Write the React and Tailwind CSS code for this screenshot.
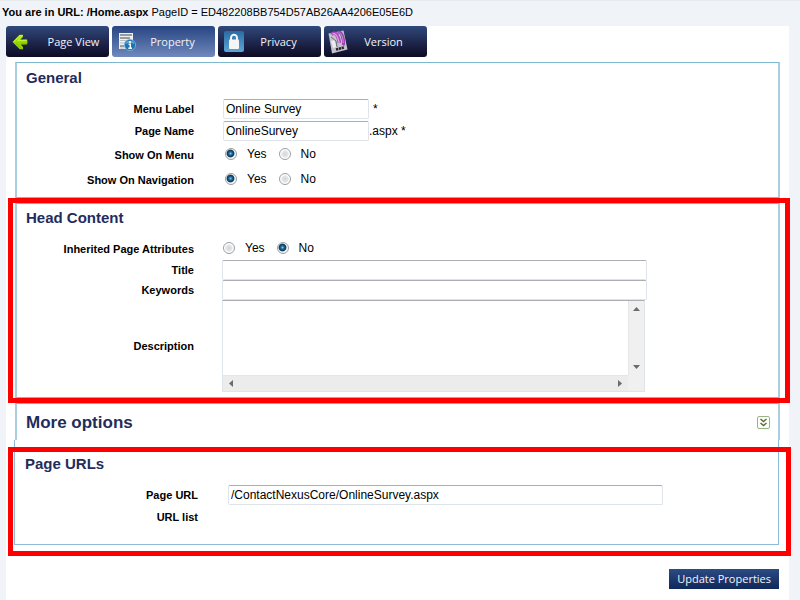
import React from "react";

const radioClass =
  "size-3 shrink-0 appearance-none rounded-full border border-[#9a9ea2] bg-[radial-gradient(circle,#d4d6d9_0,#e6e7e9_45%,#ffffff_60%)] checked:bg-[radial-gradient(circle_at_45%_45%,#7fd0f0_0,#1c6d9e_20%,#0d3555_44%,#f4f6f7_56%)]";

const inputClass =
  "h-5 min-w-0 rounded-[2px] border border-[#dfe3ea] border-t-[#abadb3] bg-white px-0.5 text-[12px] text-black outline-none";

function RadioPair({ name, label, value, className = "pl-[3px]" }) {
  return (
    <div role="radiogroup" aria-label={label} className={"flex items-center gap-3 pb-0.5 text-[12px] " + className}>
      <label className="flex items-center gap-2.5">
        <input type="radio" name={name} defaultChecked={value === "yes"} className={radioClass} />
        Yes
      </label>
      <label className="flex items-center gap-2.5">
        <input type="radio" name={name} defaultChecked={value === "no"} className={radioClass} />
        No
      </label>
    </div>
  );
}

const labelClass = "text-right text-[11px] font-bold leading-4";

function ArrowIcon() {
  return (
    <svg viewBox="0 0 16 16" className="size-4" aria-hidden="true">
      <path d="M0.5 8 7.5 0.8 10.8 0.8 11 3 8.4 5.6 15 5.4 15.5 7 15.2 10.2 8.6 10.4 11 13 11 15.2 7.8 15.2Z" fill="#96d600" />
      <path d="M1.8 7.8 8 1.6 10 1.6 6 6.5 14.6 6.3" fill="none" stroke="#c2f03a" strokeWidth="1.2" />
      <path d="M4.5 9.6 9.6 14.6M9 9.8H14.8" fill="none" stroke="#7dbb00" strokeWidth="1" />
    </svg>
  );
}

function InfoIcon() {
  return (
    <svg viewBox="0 0 18 20" className="h-5 w-[18px]" aria-hidden="true">
      <path d="M1 1H15V17H1Z" fill="#eef0f1" />
      <path d="M2 3H14M2 6H12M2 14H6" stroke="#45494d" strokeWidth="1.2" />
      <path d="M2 8.5H13M2 11H7M2 16H6" stroke="#b9bec3" strokeWidth="1" />
      <circle cx="12" cy="13" r="5.6" fill="#1b74b4" stroke="#7db6da" strokeWidth="0.8" />
      <path d="M7.3 12A5 5 0 0 1 16.7 12Q12 10 7.3 12Z" fill="#5fa9d6" />
      <circle cx="12" cy="10" r="1.1" fill="#fff" />
      <path d="M10.6 12.2H12.3V16M10.4 16.2H14" stroke="#fff" strokeWidth="1.4" fill="none" />
    </svg>
  );
}

function LockIcon() {
  return (
    <svg viewBox="0 0 20 21" className="h-[21px] w-5" aria-hidden="true">
      <defs>
        <linearGradient id="lockBg" x1="0" y1="0" x2="0" y2="1">
          <stop offset="0" stopColor="#2a6ca2" />
          <stop offset="1" stopColor="#5fa5d6" />
        </linearGradient>
      </defs>
      <rect width="20" height="21" rx="2" fill="url(#lockBg)" />
      <path d="M7 9.5V7a3 3.2 0 0 1 6 0V9.5" fill="none" stroke="#f2f5f8" strokeWidth="2" />
      <rect x="5" y="8.5" width="10" height="9.5" rx="1" fill="#f6f5f5" />
    </svg>
  );
}

function VersionIcon() {
  return (
    <svg viewBox="0 0 20 24" className="h-6 w-5" aria-hidden="true">
      <path d="M0.5 3.5 15.5 0.5 19.5 19.5 4 23.5Z" fill="#c3c2cb" />
      <path d="M3 11 6.5 10 8.5 17 5 18Z" fill="#ecebf0" />
      <path d="M3 7 8 11 9 17M13 5 16 16" fill="none" stroke="#6d6a76" strokeWidth="1" />
      <path d="M3.5 4.5C8 0.5 10.5 7 11.5 13" fill="none" stroke="#a94bbf" strokeWidth="3.6" />
      <path d="M9.5 2.5C14 1 16 8 15.5 15" fill="none" stroke="#9a45b2" strokeWidth="3" />
      <path d="M4.5 3.8C8.5 2.5 10 8 11.2 13" fill="none" stroke="#e0a3ec" strokeWidth="1.2" />
      <path d="M10.5 2.8C13.8 2.5 15 8 15.2 13" fill="none" stroke="#cf8be0" strokeWidth="1" />
      <path d="M8 19.5 16.5 17.4" stroke="#26242f" strokeWidth="2.6" strokeDasharray="2.3 0.6" />
    </svg>
  );
}

const tabs = [
  { name: "Page View", icon: <ArrowIcon />, padding: "pl-1.5", labelPadding: "pl-1.5" },
  { name: "Property", icon: <InfoIcon />, active: true, padding: "pl-1.5" },
  { name: "Privacy", icon: <LockIcon />, padding: "pl-1.5" },
  { name: "Version", icon: <VersionIcon />, padding: "pl-1" },
];

function Highlight() {
  return (
    <div className="pointer-events-none absolute -top-[5px] -right-[10px] -bottom-[5px] -left-[7px] border-[5px] border-[#ff0000]" />
  );
}

const panelClass = "border-x-2 border-y border-x-[#a9cee0] border-y-[#7db8d1]";

function Scrollbars() {
  return (
    <>
      <div className="flex flex-col items-center justify-between border-l border-[#e6e6e6] bg-[#f0f0f0] py-1.5">
        <svg viewBox="0 0 7 4" className="h-1 w-[7px]" aria-hidden="true"><path d="M0 4 3.5 0 7 4Z" fill="#6b6b6b" /></svg>
        <svg viewBox="0 0 7 4" className="h-1 w-[7px]" aria-hidden="true"><path d="M0 0 3.5 4 7 0Z" fill="#6b6b6b" /></svg>
      </div>
      <div className="flex items-center justify-between border-t border-[#e6e6e6] bg-[#ececec] px-1.5">
        <svg viewBox="0 0 4 7" className="h-[7px] w-1" aria-hidden="true"><path d="M4 0 0 3.5 4 7Z" fill="#6b6b6b" /></svg>
        <svg viewBox="0 0 4 7" className="h-[7px] w-1" aria-hidden="true"><path d="M0 0 4 3.5 0 7Z" fill="#6b6b6b" /></svg>
      </div>
      <div className="bg-[#f0f0f0]" />
    </>
  );
}

export default function App() {
  return (
    <div className="flex min-h-screen flex-col border-t border-[#e6eaed] bg-[#f0f4f8] font-['Liberation_Sans',Arial,sans-serif] text-black">
      <header className="flex h-[25px] items-center gap-[3px] pl-0.5 pb-0.5 text-[11px] whitespace-nowrap">
        <strong>You are in URL: /Home.aspx</strong>
        <span>PageID = ED482208BB754D57AB26AA4206E05E6D</span>
      </header>

      <main className="mr-[11px] ml-1.5 flex-1 bg-white">
        <nav className="flex gap-[3px]">
          {tabs.map((tab) => (
            <button
              key={tab.name}
              type="button"
              className={
                "flex h-[31px] w-[103px] items-center rounded-[3px] bg-linear-to-b font-['Open_Sans','Noto_Sans',sans-serif] text-[11px] text-[#f1f3f8] " +
                tab.padding +
                (tab.active ? " from-[#274582] to-[#7189bd]" : " from-[#31497d] to-[#0d0b25]")
              }
            >
              <span className="flex w-5 justify-start">{tab.icon}</span>
              <span className={"flex-1 pt-0.5 text-center " + (tab.labelPadding || "pr-2")}>{tab.name}</span>
            </button>
          ))}
        </nav>

        <div className="mt-[5px] mr-[9px] ml-[9px] flex flex-col gap-[5px]">
          <section className={panelClass + " pb-1"}>
            <h2 className="pt-[5px] pl-[9px] text-[15px] leading-5 font-bold text-[#1f2c5c]">General</h2>
            <div className="mt-2.5 grid grid-cols-[177px_1fr] grid-rows-[22px_22px_25px_26px] items-center gap-x-7">
              <label htmlFor="menu-label" className={labelClass}>Menu Label</label>
              <div className="flex items-center gap-1 pl-px text-[12px]">
                <input id="menu-label" defaultValue="Online Survey" className={inputClass + " w-[146px]"} />
                <span>*</span>
              </div>
              <label htmlFor="page-name" className={labelClass}>Page Name</label>
              <div className="flex items-center pl-px text-[12px]">
                <input id="page-name" defaultValue="OnlineSurvey" className={inputClass + " w-[146px]"} />
                <span>.aspx *</span>
              </div>
              <span className={labelClass}>Show On Menu</span>
              <RadioPair name="menu" label="Show On Menu" value="yes" />
              <span className={labelClass}>Show On Navigation</span>
              <RadioPair name="navigation" label="Show On Navigation" value="yes" />
            </div>
          </section>

          <div className="relative">
            <section className={panelClass + " pb-[5px]"}>
              <h2 className="pt-1 pl-[9px] text-[15px] leading-5 font-bold text-[#1f2c5c]">Head Content</h2>
              <div className="mt-2.5 grid grid-cols-[177px_1fr] grid-rows-[22px_20px_20px_92px] items-center gap-x-7">
                <span className={labelClass}>Inherited Page Attributes</span>
                <RadioPair name="inherited" label="Inherited Page Attributes" value="no" className="pl-px" />
                <label htmlFor="title" className={labelClass}>Title</label>
                <input id="title" className={inputClass + " w-full max-w-[425px]"} />
                <label htmlFor="keywords" className={labelClass}>Keywords</label>
                <input id="keywords" className={inputClass + " w-full max-w-[425px]"} />
                <label htmlFor="description" className={labelClass}>Description</label>
                <div className="grid h-full w-full max-w-[423px] grid-cols-[1fr_16px] grid-rows-[1fr_16px] border border-[#dfe3ea] border-t-[#abadb3]">
                  <textarea id="description" className="resize-none overflow-hidden bg-white px-0.5 text-[12px] outline-none" />
                  <Scrollbars />
                </div>
              </div>
            </section>
            <Highlight />
          </div>

          <section className="border-x-2 border-t border-x-[#a9cee0] border-t-[#7db8d1]">
            <div className="flex h-9 items-center justify-between pr-2 pl-[9px]">
              <h2 className="pt-0.5 text-[17px] leading-5 font-bold text-[#1f2c5c]">More options</h2>
              <button type="button" aria-label="Expand more options">
                <svg viewBox="0 0 13 13" className="size-[13px]" aria-hidden="true">
                  <rect x="0.5" y="0.5" width="12" height="12" rx="1.5" fill="#fbfdf7" stroke="#9bb486" />
                  <path d="M3.5 3 6.5 5.5 9.5 3M3.5 7 6.5 9.5 9.5 7" fill="none" stroke="#5d6b40" strokeWidth="1.5" />
                </svg>
              </button>
            </div>
          </section>
        </div>

        <div className="mr-2.5 ml-2">
          <section className="border-x border-b border-[#8dbdd6] pt-[7px]">
            <div className="relative h-[97px]">
              <h2 className="pt-[7px] pl-2.5 text-[15px] leading-5 font-bold text-[#1f2c5c]">Page URLs</h2>
              <div className="mt-2.5 grid grid-cols-[183px_1fr] grid-rows-[22px_22px] items-center gap-x-[30px]">
                <label htmlFor="page-url" className={labelClass}>Page URL</label>
                <input
                  id="page-url"
                  defaultValue="/ContactNexusCore/OnlineSurvey.aspx"
                  className={inputClass + " w-full max-w-[435px]"}
                />
                <span className={labelClass}>URL list</span>
                <span />
              </div>
              <div className="pointer-events-none absolute top-0 -right-[13px] -bottom-[12px] -left-[7px] border-[5px] border-[#ff0000]" />
            </div>
          </section>
          <div className="mt-6 flex justify-end pb-3">
            <button
              type="button"
              className="h-5 bg-linear-to-b from-[#2c4a85] to-[#10295b] px-2 pt-px font-['Open_Sans','Noto_Sans',sans-serif] text-[11px] font-medium text-[#f4f6fa]"
            >
              Update Properties
            </button>
          </div>
        </div>
      </main>
    </div>
  );
}
